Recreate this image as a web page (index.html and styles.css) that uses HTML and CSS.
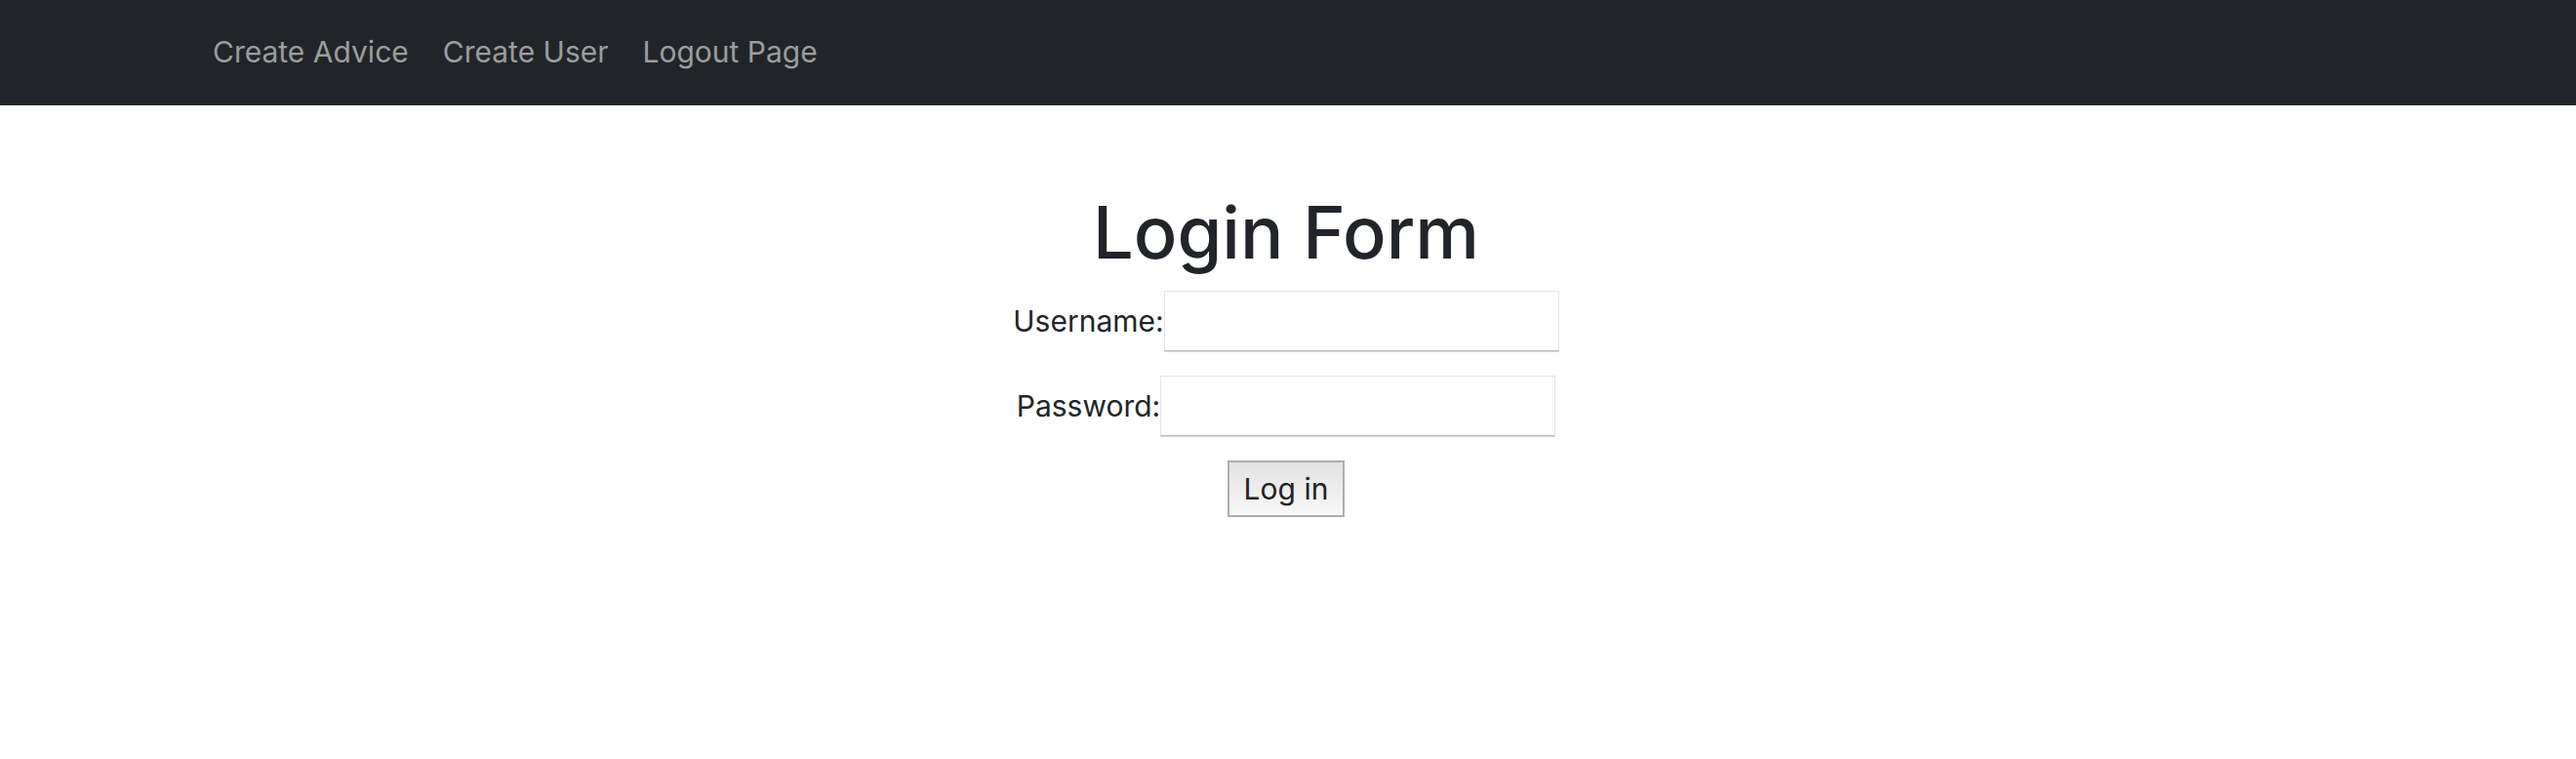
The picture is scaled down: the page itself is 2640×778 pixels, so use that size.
FILE: index.html
```html
<!DOCTYPE html>
<html lang="en">
<head>
<meta charset="utf-8">
<title>Login Form</title>
<link rel="stylesheet" href="styles.css">
</head>
<body>
<nav class="navbar">
<a class="nav-link" href="#">Create Advice</a>
<a class="nav-link" href="#">Create User</a>
<a class="nav-link" href="#">Logout Page</a>
</nav>
<main class="login">
<h1 class="title">Login Form</h1>
<form class="form">
<div class="field"><label for="username">Username:</label><input class="input" id="username" type="text"></div>
<div class="field"><label for="password">Password:</label><input class="input" id="password" type="password"></div>
<button class="submit" type="submit">Log in</button>
</form>
</main>
</body>
</html>
```
FILE: styles.css
```css
body {
  margin: 0;
  background: #fff;
  color: #212529;
  font-family: Inter, sans-serif;
  font-size: 30px;
  line-height: 48px;
}
.navbar {
  display: flex;
  gap: 35px;
  padding: 29px 218px 31px;
  background: #212529;
}
.nav-link {
  color: #9b9d9f;
  text-decoration: none;
}
.login {
  padding: 82px 4px 48px 0;
  text-align: center;
}
.title {
  margin: 0 0 12px;
  font-size: 74px;
  font-weight: 500;
  line-height: 96px;
}
.form {
  display: flex;
  flex-direction: column;
  align-items: center;
  gap: 25px;
}
.field {
  display: flex;
  align-items: center;
}
.input {
  box-sizing: border-box;
  width: 405px;
  height: 62px;
  padding: 4px 8px;
  border: 1px solid #e6e6e6;
  border-bottom-color: #bbb;
  border-radius: 0;
  box-shadow: 0 1px #d8d8d8;
  background: #fff;
  font: inherit;
}
.submit {
  padding: 3px 15px;
  border: 2px solid #adadad;
  border-radius: 0;
  background: linear-gradient(#e2e2e2, #f8f8f8);
  color: #222;
  font: inherit;
}
```
